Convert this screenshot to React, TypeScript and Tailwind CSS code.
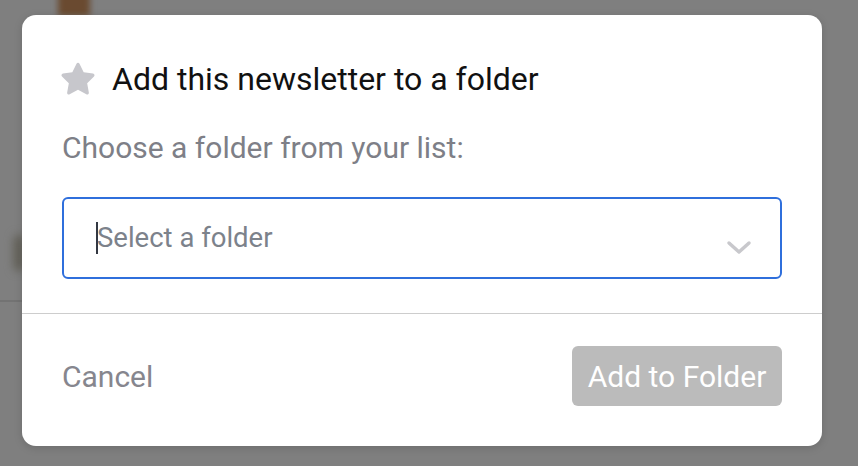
import { useState } from "react";

export default function App() {
  const [folder, setFolder] = useState("");

  return (
    <div
      className="relative w-[858px] h-[466px] overflow-hidden bg-[#7f7f7f]"
      style={{ fontFamily: "Roboto, 'Liberation Sans', sans-serif" }}
    >
      {/* Blurred page content behind the overlay */}
      <div className="absolute left-[58px] top-[-10px] w-[32px] h-[26px] bg-[#6a4a30] blur-[3px]" />
      <div className="absolute left-0 top-[300px] w-[22px] h-[2px] bg-[#737373]" />
      <div className="absolute left-[14px] top-[235px] w-[10px] h-[36px] rounded-full bg-[#5e5c52] blur-[5px]" />

      {/* Dialog */}
      <div className="absolute left-[22px] top-[15px] w-[800px] h-[431px] bg-white rounded-[14px] shadow-[0_2px_8px_rgba(0,0,0,0.15)] flex flex-col">
        <div className="px-10 pt-12 pb-[34px] flex flex-col">
          <div className="flex items-center gap-[14px] h-8">
            <svg width="40" height="40" viewBox="0 0 24 24" className="shrink-0 ml-[-4px]">
              <path
                d="M12 2.2c.4 0 .7.2.9.6l2.5 5.1 5.6.8c.9.1 1.2 1.2.6 1.8l-4.1 4 1 5.6c.2.9-.8 1.5-1.5 1.1L12 18.5l-5 2.7c-.8.4-1.7-.2-1.5-1.1l1-5.6-4.1-4c-.6-.6-.3-1.7.6-1.8l5.6-.8 2.5-5.1c.2-.4.5-.6.9-.6z"
                fill="#c7c7cc"
              />
            </svg>
            <h2 className="text-[32px] leading-8 text-[#111]">Add this newsletter to a folder</h2>
          </div>

          <p className="mt-[37px] text-[30px] leading-8 text-[#7e7f87]">Choose a folder from your list:</p>

          <div className="mt-[33px] relative h-[82px] rounded-[6px] border-2 border-[#2f6fdc] flex items-center pl-[32px] pr-[28px]">
            <span className="w-[2px] h-[32px] bg-[#333842] mr-[-1px]" />
            <input
              value={folder}
              onChange={(e) => setFolder(e.target.value)}
              placeholder="Select a folder"
              className="flex-1 bg-transparent outline-none text-[27.5px] text-[#333] placeholder:text-[#7c828b] caret-transparent"
            />
            <svg width="26" height="16" viewBox="0 0 26 16" className="mt-[20px]">
              <path d="M3 3l10 9 10-9" fill="none" stroke="#c8c8cc" strokeWidth="3.5" strokeLinecap="round" strokeLinejoin="round" />
            </svg>
          </div>
        </div>

        <div className="border-t border-[#cdcdcd] flex-1 px-10 pt-8 flex items-start justify-between">
          <button className="h-[60px] text-[30px] text-[#86868e]">Cancel</button>
          <button className="h-[60px] w-[210px] rounded-[6px] bg-[#bbbbbb] text-[30px] text-white">
            Add to Folder
          </button>
        </div>
      </div>
    </div>
  );
}
